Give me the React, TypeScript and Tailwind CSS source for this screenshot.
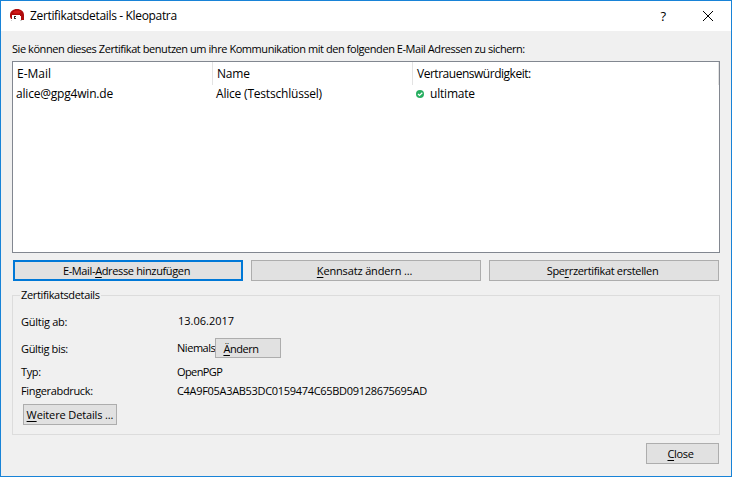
import type { ReactNode } from "react";

function Button({ className, children }: { className: string; children: ReactNode }) {
  return (
    <button
      className={`flex items-center justify-center whitespace-nowrap bg-[#e1e1e1] text-[11px] leading-[15px] ${className}`}
    >
      {children}
    </button>
  );
}

function Key({ children }: { children: ReactNode }) {
  return <span className="underline decoration-1 underline-offset-2">{children}</span>;
}

function KleopatraIcon() {
  return (
    <svg width="16" height="16" viewBox="0 0 16 16">
      <path d="M1 7C1 3.500 4 1 8 1s7 2.500 7 6v5h-3V8H4v3H2L1 9z" fill="#b00c0c" />
      <path d="M4 4.500C5.500 2 9 1.800 12 3.500L10 5.500H5z" fill="#d41a1a" />
      <path d="M3 7h8v5l-1.500 2h-5L3 12z" fill="#fff" />
      <path d="M5 8h2v1H6v2H5zM6 10h1v1H6z" fill="#333" />
      <path d="M2 12h1v1H2zM11 12h2v1h-2z" fill="#ccc" />
    </svg>
  );
}

function Column({ title, className, children }: { title: string; className: string; children: ReactNode }) {
  return (
    <div className={`${className} text-[12px] leading-4`}>
      <div className="h-[23px] border-r border-[#e3e3e3] pl-1 pt-1">{title}</div>
      <div className="flex items-center pl-[3px] pt-[1px] tracking-[-0.2px]">{children}</div>
    </div>
  );
}

export default function App() {
  return (
    <div className="flex h-[477px] w-[732px] flex-col border border-[#1883d7] bg-[#f0f0f0] font-['Open_Sans','Noto_Sans',sans-serif] text-black">
      <header className="flex h-[30px] shrink-0 items-center bg-white pl-2">
        <KleopatraIcon />
        <span className="ml-[5px] text-[12px] leading-4 tracking-[-0.34px]">Zertifikatsdetails - Kleopatra</span>
        <span className="ml-auto mr-[36px] text-[13px] font-medium leading-4">?</span>
        <svg width="12" height="12" viewBox="0 0 12 12" className="mr-[17px]" stroke="#000" strokeWidth="1">
          <path d="M1 1l10 10M11 1L1 11" />
        </svg>
      </header>
      <main className="flex flex-1 flex-col pl-[11px] pr-[11px] pt-[10px]">
        <p className="h-5 whitespace-nowrap text-[11px] leading-4 tracking-[-0.44px]">
          Sie können dieses Zertifikat benutzen um ihre Kommunikation mit den folgenden E-Mail Adressen zu sichern:
        </p>
        <section className="flex h-[192px] shrink-0 border border-[#828790] bg-white">
          <Column title="E-Mail" className="w-[200px]">alice@gpg4win.de</Column>
          <Column title="Name" className="w-[200px] tracking-[-0.2px]">Alice (Testschlüssel)</Column>
          <Column title="Vertrauenswürdigkeit:" className="w-[306px] tracking-[-0.48px]">
            <svg width="8" height="8" viewBox="0 0 8 8" className="mr-[6px]">
              <circle cx="4" cy="4" r="4" fill="#27ae60" />
              <path d="M2 4l1.500 1.500L6.300 2.800" fill="none" stroke="#fff" strokeWidth="1.2" />
            </svg>
            ultimate
          </Column>
        </section>
        <div className="mt-[7px] flex gap-2 pl-px">
          <Button className="h-[21px] w-[230px] border-2 border-[#0078d7] pr-[3px] tracking-[-0.36px]">
            <span>E-Mail-<Key>A</Key>dresse hinzufügen</span>
          </Button>
          <Button className="h-[21px] w-[230px] border border-[#adadad] pr-[3px] tracking-[-0.15px]">
            <span><Key>K</Key>ennsatz ändern ...</span>
          </Button>
          <Button className="h-[21px] w-[230px] border border-[#adadad] pr-[3px] tracking-[-0.34px]">
            <span>Spe<Key>r</Key>rzertifikat erstellen</span>
          </Button>
        </div>
        <fieldset className="mt-[6px] h-[148px] w-[708px] border border-[#dcdcdc] pl-2 text-[11px] leading-4 tracking-[-0.35px]">
          <legend className="ml-[-1px] px-px">Zertifikatsdetails</legend>
          <div className="grid grid-cols-[156px_1fr] grid-rows-[28px_26px_20px_20px] pt-[7px]">
            <span className="pt-1 tracking-[-0.26px]">Gültig ab:</span>
            <span className="pl-px pt-[3px] tracking-normal">13.06.2017</span>
            <span className="pt-[3px]">Gültig bis:</span>
            <div className="flex">
              <span className="w-[38px] pt-[2px] tracking-[-0.45px]">Niemals</span>
              <Button className="h-5 w-[66px] border border-[#adadad] pr-[14px] tracking-[-0.45px]">
                <span><Key>Ä</Key>ndern</span>
              </Button>
            </div>
            <span>Typ:</span>
            <span className="tracking-[-0.6px]">OpenPGP</span>
            <span className="-mt-px">Fingerabdruck:</span>
            <span className="-mt-px tracking-[-0.31px]">C4A9F05A3AB53DC0159474C65BD09128675695AD</span>
          </div>
          <Button className="ml-[2px] h-[21px] w-[94px] border border-[#adadad] tracking-[-0.13px]">
            <span><Key>W</Key>eitere Details ...</span>
          </Button>
        </fieldset>
        <Button className="mr-px mt-2 h-[21px] w-[73px] self-end border border-[#adadad] pr-1 tracking-[-0.34px]">
          <span><Key>C</Key>lose</span>
        </Button>
      </main>
    </div>
  );
}
